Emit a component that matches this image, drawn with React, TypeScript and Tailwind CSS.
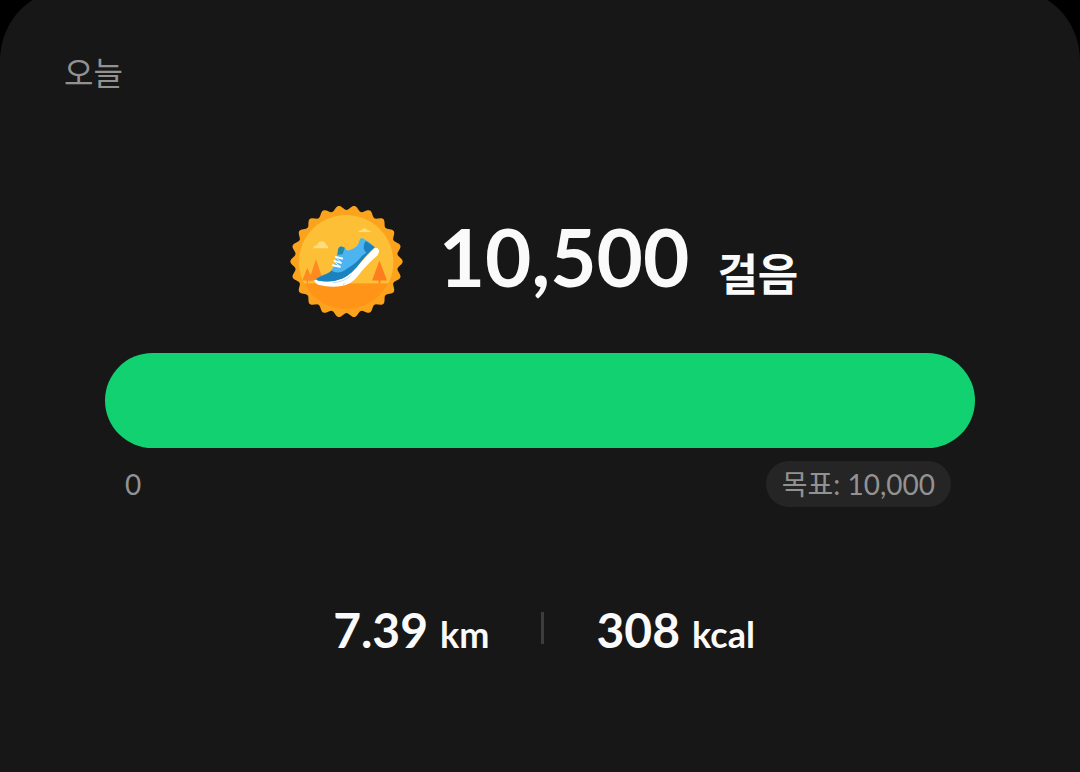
const LOBES = 22;

// Wavy outline of the badge, sampled around a circle
const badgeOutline = Array.from({ length: 352 }, (_, i) => {
  const angle = (i / 352) * Math.PI * 2;
  const radius = 162 + 7 * Math.cos(LOBES * angle);
  const x = 193 + radius * Math.cos(angle);
  const y = 198 + radius * Math.sin(angle);
  return `${x.toFixed(1)},${y.toFixed(1)}`;
}).join(" ");

const StepBadge = () => {
  return (
    <svg viewBox="23 28 340 340" className="h-[113px] w-[113px] shrink-0" aria-hidden="true">
      <defs>
        <clipPath id="disc">
          <circle cx="192" cy="200" r="142" />
        </clipPath>
      </defs>
      <polygon points={badgeOutline} fill="#fba31d" />
      <g clipPath="url(#disc)">
        <rect x="40" y="50" width="310" height="300" fill="#fcbf35" />
        <rect x="40" y="264" width="310" height="90" fill="#ff9418" />
        {/* Trees */}
        <path d="M101 191 L123 255 H104 V264 H99 V255 H80 Z" fill="#ff8a22" />
        <path d="M75 217 L92 255 H77 V264 H73 V255 H60 Z" fill="#ff8a22" />
        <path d="M292 195 L315 255 H295 V264 H290 V255 H270 Z" fill="#ff7d1e" />
        {/* Clouds */}
        <path d="M93 158 Q94 149 104 149 Q108 137 119 137 Q130 138 131 148 Q138 149 138 158 Z" fill="#ffdc80" />
        <path d="M228 109 Q230 103 238 104 Q241 97 248 98 Q254 99 256 104 Q266 103 267 109 Z" fill="#ffdc80" />
      </g>
      {/* Shoe */}
      <path
        d="M96 254 Q97 263 108 268 Q145 278 178 272 Q208 266 226 243 Q251 210 286 180 Q293 171 290 162 Q285 154 277 158 L226 211 L180 245 L130 253 Z"
        fill="#ffffff"
      />
      <path
        d="M102 250 Q118 240 137 233 Q151 225 158 203 L168 161 Q170 152 178 153 L188 157 Q192 169 207 162 Q230 154 232 135 Q233 127 240 127 Q260 137 278 154 Q260 170 237 198 Q211 235 181 249 Q148 263 106 255 Z"
        fill="#4cb4f1"
      />
      <path
        d="M102 250 Q118 240 137 233 L149 226 Q170 239 196 218 Q222 205 240 181 L278 154 Q260 170 237 198 Q211 235 181 249 Q148 263 106 255 Z"
        fill="#1c82bd"
      />
      <path d="M278 155 Q262 143 251 136 Q242 148 246 163 L254 174 Z" fill="#1c82bd" />
      <path d="M168 161 Q170 152 178 153 L188 157 L181 176 L166 178 Z" fill="#208aa8" />
      <path
        d="M161 184 L180 189 M157 196 L176 202 M152 209 L173 214"
        stroke="#ffffff"
        strokeWidth="6"
        strokeLinecap="round"
      />
      <path d="M162 187 L177 201 M158 200 L173 213" stroke="#ffffff" strokeWidth="3" />
      <path d="M151 262 Q186 260 207 239 M183 270 L187 262" fill="none" stroke="#9fcbe2" strokeWidth="2" />
    </svg>
  );
};

const Stat = ({ value, unit }: { value: string; unit: string }) => {
  return (
    <p className="flex items-baseline gap-3 text-5xl leading-[48px] font-bold">
      {value}
      <span className="text-4xl leading-[48px]">{unit}</span>
    </p>
  );
};

const App = () => {
  return (
    <div className="min-h-screen overflow-hidden bg-black font-[Lato,'Noto_Sans_CJK_KR',sans-serif] text-[#fafafa]">
      <main className="-mt-3 min-h-[calc(100vh+12px)] rounded-t-[72px] bg-[#171717] pt-[65px] pb-24">
        <h1 className="px-16 text-[32px] leading-10 text-[#929292]">오늘</h1>

        {/* Step count */}
        <div className="mt-28 flex items-center justify-center gap-9 pl-2">
          <StepBadge />
          <p className="flex items-end gap-7 pb-3 text-[80px] leading-[84px] font-bold">
            10,500
            <span className="text-[44px] leading-[48px]">걸음</span>
          </p>
        </div>

        {/* Progress towards the goal */}
        <div className="mt-[35px] px-[105px]">
          <div
            role="progressbar"
            aria-label="걸음"
            aria-valuemin={0}
            aria-valuemax={10000}
            aria-valuenow={10000}
            className="h-[95px] rounded-full bg-[#12d170]"
          />
          <div className="mt-[13px] flex items-center justify-between pr-6 pl-5 text-[28px] leading-[46px] text-[#929292]">
            <span>0</span>
            <span className="rounded-full bg-[#252525] px-4">목표: 10,000</span>
          </div>
        </div>

        {/* Distance and calories */}
        <div className="mt-[99px] flex items-center justify-center gap-[52px] pl-2">
          <Stat value="7.39" unit="km" />
          <div className="mb-2 h-8 w-[3px] bg-[#3c3c3c]" />
          <Stat value="308" unit="kcal" />
        </div>
      </main>
    </div>
  );
};

export default App;
